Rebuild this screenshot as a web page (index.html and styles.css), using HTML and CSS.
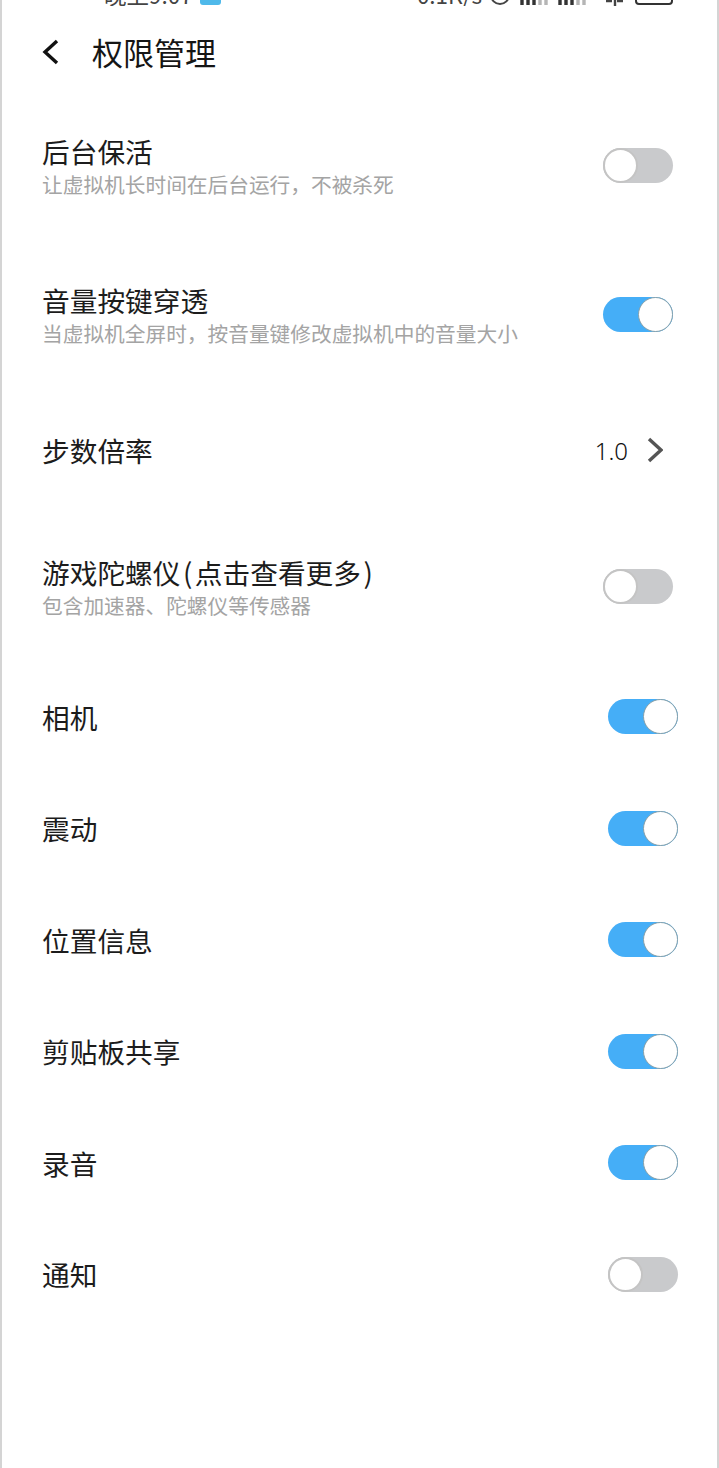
FILE: index.html
```html
<!DOCTYPE html>
<html lang="zh">
<head>
<meta charset="utf-8">
<title>权限管理</title>
<link rel="stylesheet" href="styles.css">
</head>
<body>
<div class="page">
  <div class="status">
    <div class="status-left"><span>晚上9:07</span><i class="cloud"></i></div>
    <div class="status-right">
      <span>0.1K/s</span>
      <i class="ring"></i>
      <svg class="sig" viewBox="0 0 30 12"><path d="M2 12V7M8 12V5M14 12V3" stroke="#333" stroke-width="3.4"/><path d="M20 12V2M26 12V0" stroke="#b5b5b5" stroke-width="3.4"/></svg>
      <svg class="sig" viewBox="0 0 30 12"><path d="M2 12V7M8 12V5M14 12V3" stroke="#333" stroke-width="3.4"/><path d="M20 12V2M26 12V0" stroke="#b5b5b5" stroke-width="3.4"/></svg>
      <svg class="wifi" viewBox="0 0 20 12"><path d="M10 0v12M3 3h14M1 7h6M12 7h6" stroke="#444" stroke-width="2.4"/></svg>
      <i class="batt"></i>
    </div>
  </div>
  <header class="head">
    <svg class="back" viewBox="0 0 18 26"><path d="M15 2 3 13l12 11" fill="none" stroke="#111" stroke-width="3.4"/></svg>
    <h1>权限管理</h1>
  </header>
  <section class="group">
    <div class="row h-a"><div class="txt"><div class="name">后台保活</div><div class="sub">让虚拟机长时间在后台运行，不被杀死</div></div><span class="sw"></span></div>
    <div class="row h-b"><div class="txt"><div class="name">音量按键穿透</div><div class="sub">当虚拟机全屏时，按音量键修改虚拟机中的音量大小</div></div><span class="sw on"></span></div>
    <div class="row h-c"><div class="name">步数倍率</div><div class="val"><span>1.0</span><svg class="chev" viewBox="0 0 16 26"><path d="M2 2l12 11L2 24" fill="none" stroke="#555" stroke-width="3.4"/></svg></div></div>
    <div class="row h-d"><div class="txt"><div class="name">游戏陀螺仪<span class="paren">(</span>点击查看更多<span class="paren">)</span></div><div class="sub">包含加速器、陀螺仪等传感器</div></div><span class="sw"></span></div>
  </section>
  <section class="group wide">
    <div class="row"><div class="name">相机</div><span class="sw on"></span></div>
    <div class="row"><div class="name">震动</div><span class="sw on"></span></div>
    <div class="row"><div class="name">位置信息</div><span class="sw on"></span></div>
    <div class="row"><div class="name">剪贴板共享</div><span class="sw on"></span></div>
    <div class="row"><div class="name">录音</div><span class="sw on"></span></div>
    <div class="row"><div class="name">通知</div><span class="sw"></span></div>
  </section>
</div>
</body>
</html>
```
FILE: styles.css
```css
* { box-sizing: border-box; }
html, body { margin: 0; padding: 0; }
body { background: #fff; font-family: "Noto Sans CJK SC", "Noto Sans", sans-serif; color: #1c1c1c; }
.page { width: 719px; height: 1468px; overflow: hidden; border-left: 2px solid #d4d4d4; border-right: 2px solid #d4d4d4; background: #fff; }
.status { height: 6px; overflow: hidden; display: flex; justify-content: space-between; align-items: flex-end; padding: 0 44px 0 102px; font-size: 22.5px; color: #444; line-height: 24px; }
.status-left, .status-right { display: flex; align-items: flex-end; flex: none; height: 24px; }
.status-left { gap: 7px; }
.status-right { gap: 8px; }
.cloud { width: 21px; height: 20px; background: #4fb9ea; border-radius: 3px; margin-bottom: 1px; }
.ring { width: 20px; height: 20px; border: 2.5px solid #444; border-radius: 50%; margin-bottom: 1px; }
.sig { width: 30px; height: 12px; margin-bottom: 1px; }
.sig:first-of-type { margin-left: 2px; }
.wifi { width: 20px; height: 12px; margin-left: 9px; margin-bottom: 0; }
.batt { width: 38px; height: 18px; border: 2px solid #333; border-radius: 4px; margin-left: 2px; margin-bottom: 1px; }
.head { height: 94px; display: flex; align-items: center; padding-left: 40px; padding-bottom: 2px; }
.back { width: 18px; height: 26px; margin-right: 32px; }
h1 { margin: 0; font-size: 31px; font-weight: 400; line-height: 40px; color: #151515; }
.group { padding: 0 44px 0 40px; }
.group.wide { padding-right: 39px; }
.row { display: flex; justify-content: space-between; align-items: center; height: 111.5px; }
.h-a { height: 130px; }
.h-b { height: 168px; }
.h-c { height: 104px; }
.h-d { height: 150px; margin-top: 9px; }
.name { font-size: 27.7px; line-height: 36px; color: #1c1c1c; }
.paren { margin: 0 2.5px; }
.sub { font-size: 20.7px; line-height: 26px; color: #a4a4a4; margin-top: 2px; }
.val { display: flex; align-items: center; gap: 19px; margin-right: 10px; font-size: 24px; font-family: "Noto Sans", sans-serif; font-weight: 300; color: #111; }
.chev { width: 16px; height: 26px; }
.sw { flex: none; width: 70px; height: 35px; border-radius: 18px; background: #c9cacc; position: relative; }
.sw::after { content: ""; box-sizing: border-box; position: absolute; left: 0; top: 0; width: 35px; height: 35px; border-radius: 50%; background: #fff; border: 2px solid #c4c4c4; }
.sw.on { background: #45aef7; }
.sw.on::after { left: 35px; border-width: 1.5px; border-color: #86a0aa; }
```
